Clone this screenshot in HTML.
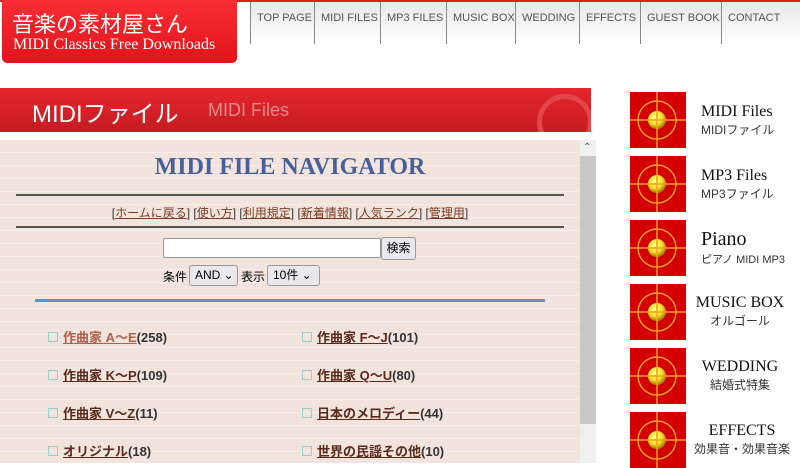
<!DOCTYPE html>
<html><head><meta charset="utf-8"><style>
*{margin:0;padding:0;box-sizing:border-box}
body{width:800px;height:463px;overflow:hidden;background:#fff;font-family:"Liberation Sans","Noto Sans CJK JP",sans-serif;position:relative}
.top{position:absolute;left:0;top:0;width:800px;height:2px;background:#e52020}
.logo{position:absolute;left:2px;top:0;width:235px;height:63px;background:linear-gradient(#f92d33,#e1141c);border-radius:0 0 5px 5px;color:#fff}
.logo .a{position:absolute;left:10px;top:7px;font-size:22px;font-family:"Liberation Sans","Noto Sans CJK JP",sans-serif}
.logo .b{position:absolute;left:11px;top:36px;font-size:16px;font-family:"Liberation Serif",serif}
.nav{position:absolute;top:2px;height:42px;background:linear-gradient(#e8e8e8,#fff);font-size:11px;color:#555;padding-left:6px;padding-top:10px;border-left:1px solid #888}
.hdr{position:absolute;left:0;top:88px;width:591px;height:44px;background:linear-gradient(#e5262c,#c51c22);overflow:hidden}
.hdr .t{position:absolute;left:32px;top:6px;color:#fff;font-size:24px}
.hdr .s{position:absolute;left:208px;top:12px;color:#e58a8c;font-size:18px}
.hdr .c{position:absolute;left:537px;top:6px;width:56px;height:56px;border:5px solid #e2464b;border-radius:50%}
.frame{position:absolute;left:0;top:140px;width:580px;height:323px;background:#f2e4dc;
background-image:repeating-linear-gradient(#f2e4dc 0 12px,#f8eee9 12px 13px)}
.sb{position:absolute;left:580px;top:140px;width:16px;height:323px;background:#f0f0f0}
.th{position:absolute;left:580px;top:156px;width:16px;height:268px;background:#c8c8c8}
h1{position:absolute;left:0;width:580px;top:154px;text-align:center;font-family:"Liberation Serif",serif;font-size:24px;color:#48609a;font-weight:bold}
.hr{position:absolute;left:16px;width:548px;height:2px;background:#555}
.links{position:absolute;left:0;width:580px;top:204px;text-align:center;font-size:12px;color:#333}
.links u{color:#7a3a25}
.in{position:absolute;left:163px;top:238px;width:218px;height:20px;background:#fff;border:1px solid #999;border-radius:2px}
.btn{position:absolute;left:381px;top:237px;width:35px;height:23px;background:#e9e9ed;border:1px solid #999;border-radius:3px;font-size:12px;text-align:center;line-height:21px}
.sel{position:absolute;top:265px;height:21px;background:#e9e9ed;border:1px solid #999;border-radius:3px;font-size:12px;line-height:19px;padding-left:5px}
.lbl{position:absolute;top:268px;font-size:12px}
.blue{position:absolute;left:35px;top:299px;width:510px;height:3px;background:#5d93c9}
.it{position:absolute;font-size:13px;font-weight:bold;color:#333}
.it:before{content:"";display:inline-block;width:8px;height:8px;border:1px solid #9cc;margin-right:5px;vertical-align:0}
.it u{color:#5a2a1a}
.ic{position:absolute;left:630px;width:56px;height:56px}
.rt{position:absolute;text-align:center;color:#111}
.rt .e{font-family:"Liberation Serif",serif;font-size:15px}
.rt .j{font-size:12px;color:#333}
</style></head><body>
<div class="top"></div>
<div class="logo"><div class="a">音楽の素材屋さん</div><div class="b">MIDI Classics Free Downloads</div></div>
<div class="nav" style="left:250px;width:64px">TOP PAGE</div>
<div class="nav" style="left:314px;width:66px">MIDI FILES</div>
<div class="nav" style="left:380px;width:66px">MP3 FILES</div>
<div class="nav" style="left:446px;width:69px">MUSIC BOX</div>
<div class="nav" style="left:515px;width:64px">WEDDING</div>
<div class="nav" style="left:579px;width:61px">EFFECTS</div>
<div class="nav" style="left:640px;width:81px">GUEST BOOK</div>
<div class="nav" style="left:721px;width:79px">CONTACT</div>
<div class="hdr"><div class="t">MIDIファイル</div><div class="s">MIDI Files</div><div class="c"></div></div>
<div class="frame"></div><div class="sb"></div><div class="th"></div>
<div style="position:absolute;left:583px;top:142px;font-size:10px;color:#555">&#8963;</div>
<h1>MIDI FILE NAVIGATOR</h1>
<div class="hr" style="top:194px"></div>
<div class="links">[<u>ホームに戻る</u>] [<u>使い方</u>] [<u>利用規定</u>] [<u>新着情報</u>] [<u>人気ランク</u>] [<u>管理用</u>]</div>
<div class="hr" style="top:226px"></div>
<div class="in"></div><div class="btn">検索</div>
<div class="lbl" style="left:163px">条件</div><div class="sel" style="left:189px;width:49px">AND ⌄</div>
<div class="lbl" style="left:241px">表示</div><div class="sel" style="left:267px;width:53px">10件 ⌄</div>
<div class="blue"></div>
<div class="it" style="left:48px;top:327px"><u style="color:#b0604a">作曲家 A～E</u>(258)</div>
<div class="it" style="left:302px;top:327px"><u>作曲家 F～J</u>(101)</div>
<div class="it" style="left:48px;top:365px"><u>作曲家 K～P</u>(109)</div>
<div class="it" style="left:302px;top:365px"><u>作曲家 Q～U</u>(80)</div>
<div class="it" style="left:48px;top:403px"><u>作曲家 V～Z</u>(11)</div>
<div class="it" style="left:302px;top:403px"><u>日本のメロディー</u>(44)</div>
<div class="it" style="left:48px;top:441px"><u>オリジナル</u>(18)</div>
<div class="it" style="left:302px;top:441px"><u>世界の民謡その他</u>(10)</div>
<svg width="0" height="0" style="position:absolute"><defs><radialGradient id="g" cx="40%" cy="35%" r="65%"><stop offset="0" stop-color="#ffff90"/><stop offset=".6" stop-color="#f0e020"/><stop offset="1" stop-color="#a08000"/></radialGradient></defs></svg>
<svg class="ic" style="top:92px" viewBox="0 0 56 56"><rect width="56" height="56" fill="#d40000"/><circle cx="27" cy="28" r="19" fill="none" stroke="#f0a020" stroke-width="1.5"/><circle cx="27" cy="28" r="9" fill="url(#g)"/><path d="M0 28H56M27 0V56" stroke="#f0a020" stroke-width="1.5"/></svg>
<svg class="ic" style="top:156px" viewBox="0 0 56 56"><rect width="56" height="56" fill="#d40000"/><circle cx="27" cy="28" r="19" fill="none" stroke="#f0a020" stroke-width="1.5"/><circle cx="27" cy="28" r="9" fill="url(#g)"/><path d="M0 28H56M27 0V56" stroke="#f0a020" stroke-width="1.5"/></svg>
<svg class="ic" style="top:220px" viewBox="0 0 56 56"><rect width="56" height="56" fill="#d40000"/><circle cx="27" cy="28" r="19" fill="none" stroke="#f0a020" stroke-width="1.5"/><circle cx="27" cy="28" r="9" fill="url(#g)"/><path d="M0 28H56M27 0V56" stroke="#f0a020" stroke-width="1.5"/></svg>
<svg class="ic" style="top:284px" viewBox="0 0 56 56"><rect width="56" height="56" fill="#d40000"/><circle cx="27" cy="28" r="19" fill="none" stroke="#f0a020" stroke-width="1.5"/><circle cx="27" cy="28" r="9" fill="url(#g)"/><path d="M0 28H56M27 0V56" stroke="#f0a020" stroke-width="1.5"/></svg>
<svg class="ic" style="top:348px" viewBox="0 0 56 56"><rect width="56" height="56" fill="#d40000"/><circle cx="27" cy="28" r="19" fill="none" stroke="#f0a020" stroke-width="1.5"/><circle cx="27" cy="28" r="9" fill="url(#g)"/><path d="M0 28H56M27 0V56" stroke="#f0a020" stroke-width="1.5"/></svg>
<svg class="ic" style="top:412px" viewBox="0 0 56 56"><rect width="56" height="56" fill="#d40000"/><circle cx="27" cy="28" r="19" fill="none" stroke="#f0a020" stroke-width="1.5"/><circle cx="27" cy="28" r="9" fill="url(#g)"/><path d="M0 28H56M27 0V56" stroke="#f0a020" stroke-width="1.5"/></svg>
<div class="rt" style="left:701px;top:103px;text-align:left"><div class="e" style="font-size:16px">MIDI Files</div><div class="j">MIDIファイル</div></div>
<div class="rt" style="left:701px;top:167px;text-align:left"><div class="e" style="font-size:16px">MP3 Files</div><div class="j">MP3ファイル</div></div>
<div class="rt" style="left:701px;top:228px;text-align:left"><div class="e" style="font-size:20px">Piano</div><div class="j" style="font-size:11px">ピアノ MIDI MP3</div></div>
<div class="rt" style="left:690px;top:294px;width:100px"><div class="e" style="font-size:16px">MUSIC BOX</div><div class="j">オルゴール</div></div>
<div class="rt" style="left:690px;top:358px;width:100px"><div class="e" style="font-size:16px">WEDDING</div><div class="j">結婚式特集</div></div>
<div class="rt" style="left:690px;top:422px;width:104px"><div class="e" style="font-size:16px">EFFECTS</div><div class="j">効果音・効果音楽</div></div>
</body></html>
